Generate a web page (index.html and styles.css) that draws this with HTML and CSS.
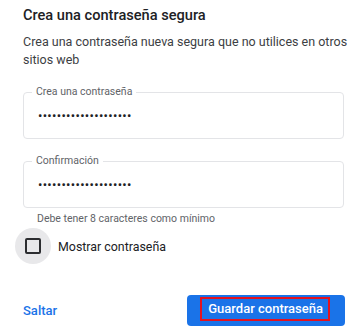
FILE: index.html
```html
<!DOCTYPE html>
<html lang="es">
<head>
<meta charset="utf-8">
<title>Crea una contraseña segura</title>
<link rel="stylesheet" href="styles.css">
</head>
<body>
<main class="dialog">
  <h1 class="title">Crea una contraseña segura</h1>
  <p class="desc">Crea una contraseña nueva segura que no utilices en otros sitios web</p>
  <fieldset class="field">
    <legend class="field-label">Crea una contraseña</legend>
    <span class="dots">••••••••••••••••••••</span>
  </fieldset>
  <fieldset class="field field-second">
    <legend class="field-label">Confirmación</legend>
    <span class="dots">••••••••••••••••••••</span>
  </fieldset>
  <p class="hint">Debe tener 8 caracteres como mínimo</p>
  <label class="check">
    <span class="check-ripple"><span class="check-box"></span></span>
    <span class="check-text">Mostrar contraseña</span>
  </label>
  <div class="actions">
    <button class="skip" type="button">Saltar</button>
    <button class="save" type="button"><span class="save-label">Guardar contraseña</span></button>
  </div>
</main>
</body>
</html>
```
FILE: styles.css
```css
html, body {
  margin: 0;
  padding: 0;
  background: #ffffff;
}
body {
  font-family: Roboto, "Liberation Sans", Arial, sans-serif;
  color: #202124;
}
.dialog {
  width: 350px;
  box-sizing: border-box;
  padding: 0 6px 0 23px;
}
.title {
  margin: 0;
  padding-top: 5px;
  font-size: 14.6px;
  font-weight: 500;
  line-height: 20px;
  color: #202124;
}
.desc {
  margin: 8px -4px 0 0;
  font-size: 12.5px;
  line-height: 18px;
  color: #3c4043;
}
.field {
  margin: 16px 0 0;
  padding: 9px 12px 14px 14px;
  border: 1px solid #e3e4e7;
  border-radius: 4px;
  min-width: 0;
}
.field-second {
  margin-top: 15px;
}
.field-label {
  margin-left: -6px;
  padding: 0 4px;
  font-size: 10.5px;
  line-height: 14px;
  color: #5f6368;
}
.dots {
  display: block;
  font-size: 13px;
  line-height: 16px;
  letter-spacing: 0.3px;
  color: #202124;
}
.hint {
  margin: 4px 0 0;
  padding-left: 14px;
  font-size: 10.5px;
  line-height: 14px;
  color: #5f6368;
}
.check {
  display: flex;
  align-items: center;
  gap: 7px;
  margin: 2px 0 0 -8px;
}
.check-ripple {
  width: 36px;
  height: 36px;
  border-radius: 50%;
  background: #e8e8ea;
  display: flex;
  align-items: center;
  justify-content: center;
}
.check-box {
  width: 12px;
  height: 12px;
  border: 2px solid #2c2d30;
  border-radius: 2px;
}
.check-text {
  font-size: 12.4px;
  color: #202124;
}
.actions {
  display: flex;
  align-items: center;
  justify-content: space-between;
  margin-top: 31px;
  margin-right: -1px;
}
.skip {
  border: 0;
  background: none;
  padding: 0;
  font-family: inherit;
  font-size: 13px;
  font-weight: 500;
  color: #1a73e8;
}
.save {
  display: flex;
  align-items: flex-start;
  height: 31px;
  box-sizing: border-box;
  padding: 2px 15px 0 13px;
  border: 0;
  border-radius: 4px;
  background: #1a73e8;
  font-family: inherit;
}
.save-label {
  display: block;
  border: 2px solid #e3131f;
  padding: 0 5px 0 6px;
  font-size: 13px;
  font-weight: 500;
  line-height: 20px;
  color: #ffffff;
}
```
